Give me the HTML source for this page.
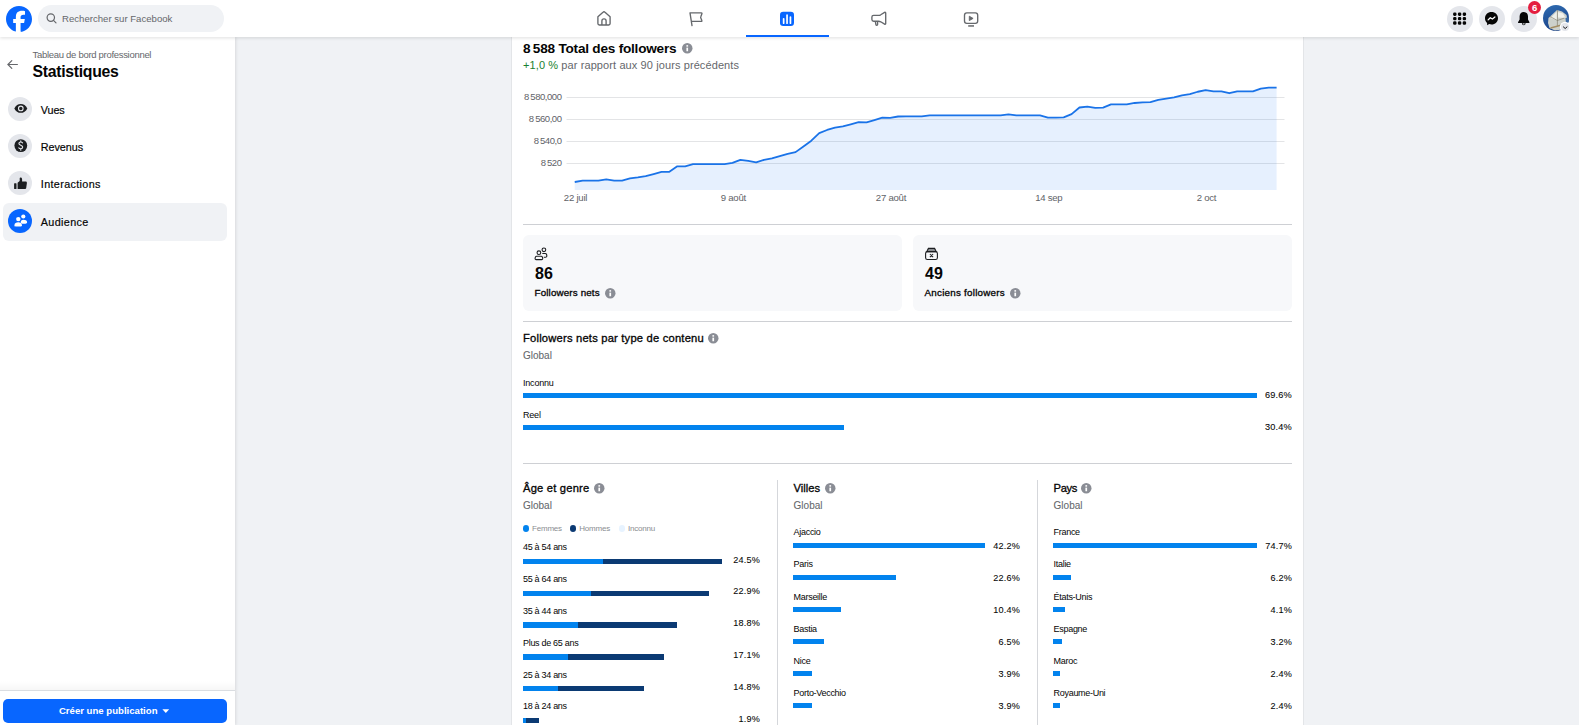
<!DOCTYPE html>
<html><head><meta charset="utf-8"><title>Statistiques</title>
<style>
html,body{margin:0;padding:0;width:1579px;height:725px;overflow:hidden;background:#F0F2F5;}
body{position:relative;font-family:"Liberation Sans",sans-serif;}
.t{position:absolute;white-space:nowrap;line-height:1;}
.r{position:absolute;}
.a{position:absolute;overflow:visible;}
</style></head><body>
<div class="r" style="left:0px;top:0px;width:1579px;height:725px;background:#F0F2F5;"></div>
<div class="r" style="left:512px;top:30px;width:791px;height:700px;background:#FFFFFF;box-shadow:0 0 0 1px rgba(0,0,0,0.05);"></div>
<div class="t" style="left:523.00px;top:41.89px;font-size:13.6px;color:#050505;font-weight:700;letter-spacing:-0.22px;">8&#8201;588 Total des followers</div>
<svg class="a" style="left:680.75px;top:42.25px" width="12.5" height="12.5" viewBox="680.75 42.25 12.5 12.5"><circle cx="687" cy="48.5" r="5.25" fill="#8A8D95"/><rect x="686.15" y="45.4" width="1.7" height="1.5" fill="#fff"/><rect x="686.15" y="47.9" width="1.7" height="3.6" fill="#fff"/></svg>
<div class="t" style="left:523.00px;top:59.69px;font-size:11px;color:#65676B;font-weight:400;letter-spacing:0.1px;"><span style="color:#1A7F30">+1,0&nbsp;%</span> par rapport aux 90 jours précédents</div>
<svg class="a" style="left:0;top:0" width="1579" height="725" viewBox="0 0 1579 725"><line x1="566.5" y1="97.5" x2="1284.5" y2="97.5" stroke="#E3E4E6" stroke-width="1"/><line x1="566.5" y1="119.5" x2="1284.5" y2="119.5" stroke="#E3E4E6" stroke-width="1"/><line x1="566.5" y1="141.5" x2="1284.5" y2="141.5" stroke="#E3E4E6" stroke-width="1"/><line x1="566.5" y1="163.5" x2="1284.5" y2="163.5" stroke="#E3E4E6" stroke-width="1"/><path d="M574.75,190 L574.75,182.00 L582.64,180.63 L590.52,180.60 L598.41,180.60 L606.29,179.43 L614.18,180.60 L622.07,180.60 L629.95,178.40 L637.84,177.37 L645.72,176.14 L653.61,174.03 L661.50,171.86 L669.38,171.74 L677.27,166.32 L685.15,166.30 L693.04,164.20 L700.93,164.20 L708.81,164.20 L716.70,164.20 L724.58,164.11 L732.47,162.86 L740.36,159.80 L748.24,160.91 L756.13,162.27 L764.01,159.82 L771.90,158.31 L779.78,156.11 L787.67,153.92 L795.56,152.13 L803.44,146.46 L811.33,140.72 L819.21,133.19 L827.10,129.98 L834.99,127.62 L842.87,126.42 L850.76,124.39 L858.64,122.23 L866.53,122.28 L874.42,120.02 L882.30,117.68 L890.19,117.79 L898.07,116.49 L905.96,116.40 L913.85,116.40 L921.73,116.35 L929.62,115.30 L937.50,115.30 L945.39,115.30 L953.28,115.30 L961.16,115.31 L969.05,115.33 L976.93,115.35 L984.82,115.37 L992.71,115.38 L1000.59,115.40 L1008.48,114.31 L1016.36,115.38 L1024.25,115.40 L1032.14,115.40 L1040.02,115.46 L1047.91,117.60 L1055.79,117.60 L1063.68,117.34 L1071.57,114.11 L1079.45,107.51 L1087.34,106.68 L1095.22,107.80 L1103.11,107.59 L1110.99,104.40 L1118.88,104.40 L1126.77,104.32 L1134.65,102.98 L1142.54,102.30 L1150.42,102.20 L1158.31,99.88 L1166.20,98.64 L1174.08,97.42 L1181.97,95.32 L1189.85,94.19 L1197.74,91.75 L1205.63,90.07 L1213.51,91.30 L1221.40,91.42 L1229.28,93.23 L1237.17,91.30 L1245.06,91.30 L1252.94,91.38 L1260.83,88.60 L1268.71,87.70 L1276.60,87.70 L1276.6,190 Z" fill="#1877F2" fill-opacity="0.11"/><polyline points="574.75,182.00 582.64,180.63 590.52,180.60 598.41,180.60 606.29,179.43 614.18,180.60 622.07,180.60 629.95,178.40 637.84,177.37 645.72,176.14 653.61,174.03 661.50,171.86 669.38,171.74 677.27,166.32 685.15,166.30 693.04,164.20 700.93,164.20 708.81,164.20 716.70,164.20 724.58,164.11 732.47,162.86 740.36,159.80 748.24,160.91 756.13,162.27 764.01,159.82 771.90,158.31 779.78,156.11 787.67,153.92 795.56,152.13 803.44,146.46 811.33,140.72 819.21,133.19 827.10,129.98 834.99,127.62 842.87,126.42 850.76,124.39 858.64,122.23 866.53,122.28 874.42,120.02 882.30,117.68 890.19,117.79 898.07,116.49 905.96,116.40 913.85,116.40 921.73,116.35 929.62,115.30 937.50,115.30 945.39,115.30 953.28,115.30 961.16,115.31 969.05,115.33 976.93,115.35 984.82,115.37 992.71,115.38 1000.59,115.40 1008.48,114.31 1016.36,115.38 1024.25,115.40 1032.14,115.40 1040.02,115.46 1047.91,117.60 1055.79,117.60 1063.68,117.34 1071.57,114.11 1079.45,107.51 1087.34,106.68 1095.22,107.80 1103.11,107.59 1110.99,104.40 1118.88,104.40 1126.77,104.32 1134.65,102.98 1142.54,102.30 1150.42,102.20 1158.31,99.88 1166.20,98.64 1174.08,97.42 1181.97,95.32 1189.85,94.19 1197.74,91.75 1205.63,90.07 1213.51,91.30 1221.40,91.42 1229.28,93.23 1237.17,91.30 1245.06,91.30 1252.94,91.38 1260.83,88.60 1268.71,87.70 1276.60,87.70" fill="none" stroke="#1A73E8" stroke-width="1.8" stroke-linejoin="round"/></svg>
<div class="t" style="right:1017.50px;top:91.66px;font-size:9.5px;color:#5F6368;font-weight:400;letter-spacing:-0.45px;">8&#8201;580,000</div>
<div class="t" style="right:1017.50px;top:113.66px;font-size:9.5px;color:#5F6368;font-weight:400;letter-spacing:-0.45px;">8&#8201;560,00</div>
<div class="t" style="right:1017.50px;top:135.66px;font-size:9.5px;color:#5F6368;font-weight:400;letter-spacing:-0.45px;">8&#8201;540,0</div>
<div class="t" style="right:1017.50px;top:157.66px;font-size:9.5px;color:#5F6368;font-weight:400;letter-spacing:-0.45px;">8&#8201;520</div>
<div class="t" style="left:535.5px;width:80px;text-align:center;top:193.47px;font-size:9.6px;color:#5F6368;letter-spacing:-0.25px">22 juil</div>
<div class="t" style="left:693.3px;width:80px;text-align:center;top:193.47px;font-size:9.6px;color:#5F6368;letter-spacing:-0.25px">9 août</div>
<div class="t" style="left:851px;width:80px;text-align:center;top:193.47px;font-size:9.6px;color:#5F6368;letter-spacing:-0.25px">27 août</div>
<div class="t" style="left:1008.8px;width:80px;text-align:center;top:193.47px;font-size:9.6px;color:#5F6368;letter-spacing:-0.25px">14 sep</div>
<div class="t" style="left:1166.5px;width:80px;text-align:center;top:193.47px;font-size:9.6px;color:#5F6368;letter-spacing:-0.25px">2 oct</div>
<div class="r" style="left:523px;top:224px;width:769px;height:1px;background:#CED0D4;"></div>
<div class="r" style="left:523px;top:235px;width:379px;height:76px;background:#F7F8FA;border-radius:6px;"></div>
<div class="t" style="left:535.00px;top:265.76px;font-size:16px;color:#050505;font-weight:700;letter-spacing:0.1px;">86</div>
<div class="t" style="left:534.50px;top:288.00px;font-size:9.8px;color:#050505;font-weight:400;letter-spacing:0.15px;-webkit-text-stroke:0.32px currentColor;">Followers nets</div>
<div class="r" style="left:913px;top:235px;width:379px;height:76px;background:#F7F8FA;border-radius:6px;"></div>
<div class="t" style="left:925.00px;top:265.76px;font-size:16px;color:#050505;font-weight:700;letter-spacing:0.1px;">49</div>
<div class="t" style="left:924.50px;top:288.00px;font-size:9.8px;color:#050505;font-weight:400;letter-spacing:0.25px;-webkit-text-stroke:0.32px currentColor;">Anciens followers</div>
<svg class="a" style="left:603.75px;top:286.75px" width="12.5" height="12.5" viewBox="603.75 286.75 12.5 12.5"><circle cx="610" cy="293" r="5.25" fill="#8A8D95"/><rect x="609.15" y="289.9" width="1.7" height="1.5" fill="#fff"/><rect x="609.15" y="292.4" width="1.7" height="3.6" fill="#fff"/></svg>
<svg class="a" style="left:1008.75px;top:286.75px" width="12.5" height="12.5" viewBox="1008.75 286.75 12.5 12.5"><circle cx="1015" cy="293" r="5.25" fill="#8A8D95"/><rect x="1014.15" y="289.9" width="1.7" height="1.5" fill="#fff"/><rect x="1014.15" y="292.4" width="1.7" height="3.6" fill="#fff"/></svg>
<svg class="a" style="left:532px;top:244px" width="20" height="20" viewBox="532 244 20 20" fill="none" stroke="#1C1E21" stroke-width="1.1" stroke-linejoin="round"><circle cx="538.9" cy="252.7" r="1.85"/><path d="M536.7,256.3 H541.1 C541.9,256.3 542.3,256.8 542.5,257.4 L542.7,258.4 C542.8,259.1 542.4,259.6 541.7,259.6 H536.1 C535.4,259.6 535,259.1 535.1,258.4 L535.3,257.4 C535.5,256.8 535.9,256.3 536.7,256.3 Z"/><circle cx="543.9" cy="249.8" r="1.85"/><path d="M542.3,253.5 H545.2 C545.9,253.5 546.4,253.9 546.6,254.5 L546.8,255.6 C547,256.5 546.4,257.3 545.5,257.3 H543.8"/></svg>
<svg class="a" style="left:922px;top:244px" width="20" height="20" viewBox="922 244 20 20" fill="none" stroke="#1C1E21" stroke-width="1.1"><path d="M928.4,248.4 H934.6 L936.2,251.6 H926.8 Z" fill="#8A8D91"/><rect x="925.6" y="251.6" width="11.8" height="7.9" rx="1.8"/><path d="M929.9,254 L933.1,257.2 M933.1,254 L929.9,257.2" stroke-width="1.05"/></svg>
<div class="r" style="left:523px;top:321px;width:769px;height:1px;background:#CED0D4;"></div>
<div class="t" style="left:523.00px;top:332.52px;font-size:11.2px;color:#050505;font-weight:400;letter-spacing:0.2px;-webkit-text-stroke:0.32px currentColor;">Followers nets par type de contenu</div>
<svg class="a" style="left:706.55px;top:331.95px" width="12.5" height="12.5" viewBox="706.55 331.95 12.5 12.5"><circle cx="712.8" cy="338.2" r="5.25" fill="#8A8D95"/><rect x="711.9499999999999" y="335.09999999999997" width="1.7" height="1.5" fill="#fff"/><rect x="711.9499999999999" y="337.59999999999997" width="1.7" height="3.6" fill="#fff"/></svg>
<div class="t" style="left:523.00px;top:351.34px;font-size:10px;color:#65676B;font-weight:400;-webkit-text-stroke:0.08px currentColor;">Global</div>
<div class="t" style="left:523.00px;top:378.58px;font-size:9px;color:#050505;font-weight:400;letter-spacing:-0.2px;">Inconnu</div>
<div class="r" style="left:523px;top:393px;width:734px;height:5px;background:#0283EE;"></div>
<div class="t" style="right:287.00px;top:391.21px;font-size:9.2px;color:#050505;font-weight:400;letter-spacing:0.2px;-webkit-text-stroke:0.08px currentColor;">69.6%</div>
<div class="t" style="left:523.00px;top:411.38px;font-size:9px;color:#050505;font-weight:400;letter-spacing:-0.2px;">Reel</div>
<div class="r" style="left:523px;top:425px;width:321px;height:5px;background:#0283EE;"></div>
<div class="t" style="right:287.00px;top:423.21px;font-size:9.2px;color:#050505;font-weight:400;letter-spacing:0.2px;-webkit-text-stroke:0.08px currentColor;">30.4%</div>
<div class="r" style="left:523px;top:463px;width:769px;height:1px;background:#CED0D4;"></div>
<div class="t" style="left:523.00px;top:482.52px;font-size:11.2px;color:#050505;font-weight:400;letter-spacing:0.2px;-webkit-text-stroke:0.32px currentColor;">Âge et genre</div>
<svg class="a" style="left:592.75px;top:482.25px" width="12.5" height="12.5" viewBox="592.75 482.25 12.5 12.5"><circle cx="599" cy="488.5" r="5.25" fill="#8A8D95"/><rect x="598.15" y="485.4" width="1.7" height="1.5" fill="#fff"/><rect x="598.15" y="487.9" width="1.7" height="3.6" fill="#fff"/></svg>
<div class="t" style="left:523.00px;top:501.04px;font-size:10px;color:#65676B;font-weight:400;-webkit-text-stroke:0.08px currentColor;">Global</div>
<div class="r" style="left:523px;top:525.0px;width:6.2px;height:6.8px;border-radius:50%;background:#0283EE"></div>
<div class="t" style="left:532.00px;top:525.03px;font-size:8px;color:#8A8D91;font-weight:400;letter-spacing:-0.2px;">Femmes</div>
<div class="r" style="left:570.2px;top:525.0px;width:6.2px;height:6.8px;border-radius:50%;background:#0B3A73"></div>
<div class="t" style="left:579.20px;top:525.03px;font-size:8px;color:#8A8D91;font-weight:400;letter-spacing:-0.2px;">Hommes</div>
<div class="r" style="left:619px;top:525.0px;width:6.2px;height:6.8px;border-radius:50%;background:#E7F3FF"></div>
<div class="t" style="left:628.00px;top:525.03px;font-size:8px;color:#8A8D91;font-weight:400;letter-spacing:-0.2px;">Inconnu</div>
<div class="t" style="left:523.00px;top:543.18px;font-size:9px;color:#050505;font-weight:400;letter-spacing:-0.3px;">45 à 54 ans</div>
<div class="r" style="left:523px;top:558.8px;width:80px;height:5.2px;background:#0283EE;"></div>
<div class="r" style="left:603px;top:558.8px;width:119px;height:5.2px;background:#0B3A73;"></div>
<div class="t" style="right:819.00px;top:555.50px;font-size:9.1px;color:#050505;font-weight:400;letter-spacing:0.2px;-webkit-text-stroke:0.08px currentColor;">24.5%</div>
<div class="t" style="left:523.00px;top:575.02px;font-size:9px;color:#050505;font-weight:400;letter-spacing:-0.3px;">55 à 64 ans</div>
<div class="r" style="left:523px;top:590.64px;width:68px;height:5.2px;background:#0283EE;"></div>
<div class="r" style="left:591px;top:590.64px;width:117.70000000000005px;height:5.2px;background:#0B3A73;"></div>
<div class="t" style="right:819.00px;top:587.34px;font-size:9.1px;color:#050505;font-weight:400;letter-spacing:0.2px;-webkit-text-stroke:0.08px currentColor;">22.9%</div>
<div class="t" style="left:523.00px;top:606.86px;font-size:9px;color:#050505;font-weight:400;letter-spacing:-0.3px;">35 à 44 ans</div>
<div class="r" style="left:523px;top:622.4799999999999px;width:55px;height:5.2px;background:#0283EE;"></div>
<div class="r" style="left:578px;top:622.4799999999999px;width:99px;height:5.2px;background:#0B3A73;"></div>
<div class="t" style="right:819.00px;top:619.18px;font-size:9.1px;color:#050505;font-weight:400;letter-spacing:0.2px;-webkit-text-stroke:0.08px currentColor;">18.8%</div>
<div class="t" style="left:523.00px;top:638.70px;font-size:9px;color:#050505;font-weight:400;letter-spacing:-0.3px;">Plus de 65 ans</div>
<div class="r" style="left:523px;top:654.3199999999999px;width:45px;height:5.2px;background:#0283EE;"></div>
<div class="r" style="left:568px;top:654.3199999999999px;width:95.70000000000005px;height:5.2px;background:#0B3A73;"></div>
<div class="t" style="right:819.00px;top:651.02px;font-size:9.1px;color:#050505;font-weight:400;letter-spacing:0.2px;-webkit-text-stroke:0.08px currentColor;">17.1%</div>
<div class="t" style="left:523.00px;top:670.54px;font-size:9px;color:#050505;font-weight:400;letter-spacing:-0.3px;">25 à 34 ans</div>
<div class="r" style="left:523px;top:686.16px;width:35.200000000000045px;height:5.2px;background:#0283EE;"></div>
<div class="r" style="left:558.2px;top:686.16px;width:85.5px;height:5.2px;background:#0B3A73;"></div>
<div class="t" style="right:819.00px;top:682.86px;font-size:9.1px;color:#050505;font-weight:400;letter-spacing:0.2px;-webkit-text-stroke:0.08px currentColor;">14.8%</div>
<div class="t" style="left:523.00px;top:702.38px;font-size:9px;color:#050505;font-weight:400;letter-spacing:-0.3px;">18 à 24 ans</div>
<div class="r" style="left:523px;top:718.0px;width:2.7999999999999545px;height:5.2px;background:#0283EE;"></div>
<div class="r" style="left:525.8px;top:718.0px;width:13.0px;height:5.2px;background:#0B3A73;"></div>
<div class="t" style="right:819.00px;top:714.70px;font-size:9.1px;color:#050505;font-weight:400;letter-spacing:0.2px;-webkit-text-stroke:0.08px currentColor;">1.9%</div>
<div class="r" style="left:777px;top:480px;width:1px;height:260px;background:#D5D7DB;"></div>
<div class="r" style="left:1037px;top:480px;width:1px;height:260px;background:#D5D7DB;"></div>
<div class="t" style="left:793.60px;top:482.52px;font-size:11.2px;color:#050505;font-weight:400;-webkit-text-stroke:0.32px currentColor;">Villes</div>
<svg class="a" style="left:823.55px;top:482.25px" width="12.5" height="12.5" viewBox="823.55 482.25 12.5 12.5"><circle cx="829.8" cy="488.5" r="5.25" fill="#8A8D95"/><rect x="828.9499999999999" y="485.4" width="1.7" height="1.5" fill="#fff"/><rect x="828.9499999999999" y="487.9" width="1.7" height="3.6" fill="#fff"/></svg>
<div class="t" style="left:793.60px;top:501.04px;font-size:10px;color:#65676B;font-weight:400;-webkit-text-stroke:0.08px currentColor;">Global</div>
<div class="t" style="left:793.60px;top:528.38px;font-size:9px;color:#050505;font-weight:400;letter-spacing:-0.3px;">Ajaccio</div>
<div class="r" style="left:793px;top:543.0px;width:191.60000000000002px;height:5px;background:#0283EE;"></div>
<div class="t" style="right:559.00px;top:541.50px;font-size:9.1px;color:#050505;font-weight:400;letter-spacing:0.2px;-webkit-text-stroke:0.08px currentColor;">42.2%</div>
<div class="t" style="left:793.60px;top:560.46px;font-size:9px;color:#050505;font-weight:400;letter-spacing:-0.3px;">Paris</div>
<div class="r" style="left:793px;top:575.08px;width:103px;height:5px;background:#0283EE;"></div>
<div class="t" style="right:559.00px;top:573.58px;font-size:9.1px;color:#050505;font-weight:400;letter-spacing:0.2px;-webkit-text-stroke:0.08px currentColor;">22.6%</div>
<div class="t" style="left:793.60px;top:592.54px;font-size:9px;color:#050505;font-weight:400;letter-spacing:-0.3px;">Marseille</div>
<div class="r" style="left:793px;top:607.16px;width:48px;height:5px;background:#0283EE;"></div>
<div class="t" style="right:559.00px;top:605.66px;font-size:9.1px;color:#050505;font-weight:400;letter-spacing:0.2px;-webkit-text-stroke:0.08px currentColor;">10.4%</div>
<div class="t" style="left:793.60px;top:624.62px;font-size:9px;color:#050505;font-weight:400;letter-spacing:-0.3px;">Bastia</div>
<div class="r" style="left:793px;top:639.24px;width:30.799999999999955px;height:5px;background:#0283EE;"></div>
<div class="t" style="right:559.00px;top:637.74px;font-size:9.1px;color:#050505;font-weight:400;letter-spacing:0.2px;-webkit-text-stroke:0.08px currentColor;">6.5%</div>
<div class="t" style="left:793.60px;top:656.70px;font-size:9px;color:#050505;font-weight:400;letter-spacing:-0.3px;">Nice</div>
<div class="r" style="left:793px;top:671.3199999999999px;width:18.899999999999977px;height:5px;background:#0283EE;"></div>
<div class="t" style="right:559.00px;top:669.82px;font-size:9.1px;color:#050505;font-weight:400;letter-spacing:0.2px;-webkit-text-stroke:0.08px currentColor;">3.9%</div>
<div class="t" style="left:793.60px;top:688.78px;font-size:9px;color:#050505;font-weight:400;letter-spacing:-0.3px;">Porto-Vecchio</div>
<div class="r" style="left:793px;top:703.4px;width:18.899999999999977px;height:5px;background:#0283EE;"></div>
<div class="t" style="right:559.00px;top:701.90px;font-size:9.1px;color:#050505;font-weight:400;letter-spacing:0.2px;-webkit-text-stroke:0.08px currentColor;">3.9%</div>
<div class="t" style="left:1053.60px;top:482.52px;font-size:11.2px;color:#050505;font-weight:400;letter-spacing:-0.4px;-webkit-text-stroke:0.32px currentColor;">Pays</div>
<svg class="a" style="left:1079.55px;top:482.25px" width="12.5" height="12.5" viewBox="1079.55 482.25 12.5 12.5"><circle cx="1085.8" cy="488.5" r="5.25" fill="#8A8D95"/><rect x="1084.95" y="485.4" width="1.7" height="1.5" fill="#fff"/><rect x="1084.95" y="487.9" width="1.7" height="3.6" fill="#fff"/></svg>
<div class="t" style="left:1053.60px;top:501.04px;font-size:10px;color:#65676B;font-weight:400;-webkit-text-stroke:0.08px currentColor;">Global</div>
<div class="t" style="left:1053.60px;top:528.38px;font-size:9px;color:#050505;font-weight:400;letter-spacing:-0.3px;">France</div>
<div class="r" style="left:1053px;top:543.0px;width:203.9000000000001px;height:5px;background:#0283EE;"></div>
<div class="t" style="right:287.00px;top:541.50px;font-size:9.1px;color:#050505;font-weight:400;letter-spacing:0.2px;-webkit-text-stroke:0.08px currentColor;">74.7%</div>
<div class="t" style="left:1053.60px;top:560.46px;font-size:9px;color:#050505;font-weight:400;letter-spacing:-0.3px;">Italie</div>
<div class="r" style="left:1053px;top:575.08px;width:18px;height:5px;background:#0283EE;"></div>
<div class="t" style="right:287.00px;top:573.58px;font-size:9.1px;color:#050505;font-weight:400;letter-spacing:0.2px;-webkit-text-stroke:0.08px currentColor;">6.2%</div>
<div class="t" style="left:1053.60px;top:592.54px;font-size:9px;color:#050505;font-weight:400;letter-spacing:-0.3px;">États-Unis</div>
<div class="r" style="left:1053px;top:607.16px;width:12px;height:5px;background:#0283EE;"></div>
<div class="t" style="right:287.00px;top:605.66px;font-size:9.1px;color:#050505;font-weight:400;letter-spacing:0.2px;-webkit-text-stroke:0.08px currentColor;">4.1%</div>
<div class="t" style="left:1053.60px;top:624.62px;font-size:9px;color:#050505;font-weight:400;letter-spacing:-0.3px;">Espagne</div>
<div class="r" style="left:1053px;top:639.24px;width:9px;height:5px;background:#0283EE;"></div>
<div class="t" style="right:287.00px;top:637.74px;font-size:9.1px;color:#050505;font-weight:400;letter-spacing:0.2px;-webkit-text-stroke:0.08px currentColor;">3.2%</div>
<div class="t" style="left:1053.60px;top:656.70px;font-size:9px;color:#050505;font-weight:400;letter-spacing:-0.3px;">Maroc</div>
<div class="r" style="left:1053px;top:671.3199999999999px;width:7px;height:5px;background:#0283EE;"></div>
<div class="t" style="right:287.00px;top:669.82px;font-size:9.1px;color:#050505;font-weight:400;letter-spacing:0.2px;-webkit-text-stroke:0.08px currentColor;">2.4%</div>
<div class="t" style="left:1053.60px;top:688.78px;font-size:9px;color:#050505;font-weight:400;letter-spacing:-0.3px;">Royaume-Uni</div>
<div class="r" style="left:1053px;top:703.4px;width:7px;height:5px;background:#0283EE;"></div>
<div class="t" style="right:287.00px;top:701.90px;font-size:9.1px;color:#050505;font-weight:400;letter-spacing:0.2px;-webkit-text-stroke:0.08px currentColor;">2.4%</div>
<div class="r" style="left:0px;top:37px;width:235px;height:688px;background:#FFFFFF;box-shadow:1px 0 3px rgba(0,0,0,0.10);"></div>
<div class="t" style="left:32.60px;top:49.86px;font-size:9.5px;color:#65676B;font-weight:400;letter-spacing:-0.3px;">Tableau de bord professionnel</div>
<div class="t" style="left:32.60px;top:63.83px;font-size:15.8px;color:#050505;font-weight:700;letter-spacing:-0.3px;">Statistiques</div>
<svg class="a" style="left:4px;top:56px" width="18" height="18" viewBox="4 56 18 18" fill="none" stroke="#65676B" stroke-width="1.2" stroke-linecap="round"><path d="M17.4,64.5 H8 M11.8,60.6 L7.9,64.5 L11.8,68.4"/></svg>
<div class="r" style="left:3px;top:203px;width:224px;height:38px;background:#F0F2F5;border-radius:6px;"></div>
<div class="r" style="left:8px;top:96.9px;width:24px;height:24px;border-radius:50%;background:#E4E6EB"></div>
<div class="t" style="left:40.80px;top:104.76px;font-size:10.8px;color:#050505;font-weight:400;letter-spacing:-0.1px;-webkit-text-stroke:0.18px currentColor;">Vues</div>
<div class="r" style="left:8px;top:134px;width:24px;height:24px;border-radius:50%;background:#E4E6EB"></div>
<div class="t" style="left:40.80px;top:141.86px;font-size:10.8px;color:#050505;font-weight:400;letter-spacing:-0.05px;-webkit-text-stroke:0.18px currentColor;">Revenus</div>
<div class="r" style="left:8px;top:171px;width:24px;height:24px;border-radius:50%;background:#E4E6EB"></div>
<div class="t" style="left:40.80px;top:178.96px;font-size:10.8px;color:#050505;font-weight:400;letter-spacing:0.35px;-webkit-text-stroke:0.18px currentColor;">Interactions</div>
<div class="r" style="left:8px;top:209px;width:24px;height:24px;border-radius:50%;background:#0866FF"></div>
<div class="t" style="left:40.80px;top:216.86px;font-size:10.8px;color:#050505;font-weight:400;letter-spacing:0.35px;-webkit-text-stroke:0.18px currentColor;">Audience</div>
<svg class="a" style="left:8px;top:97px" width="24" height="24" viewBox="8 97 24 24"><path d="M14.3,108.4 C15.8,105.3 18,104 20.8,104 C23.6,104 25.8,105.3 27.3,108.4 C25.8,111.5 23.6,112.8 20.8,112.8 C18,112.8 15.8,111.5 14.3,108.4 Z" fill="#1C1E21"/><circle cx="20.8" cy="108.4" r="2.3" fill="none" stroke="#E4E6EB" stroke-width="1.1"/></svg>
<svg class="a" style="left:8px;top:134px" width="24" height="24" viewBox="8 134 24 24"><circle cx="20.8" cy="145.6" r="6.4" fill="#1C1E21"/><path d="M22.6,142.8 C22,142.2 21.4,142 20.7,142 C19.6,142 18.9,142.6 18.9,143.5 C18.9,145.6 22.7,144.8 22.7,147.1 C22.7,148.1 21.9,148.8 20.8,148.8 C20,148.8 19.3,148.5 18.8,147.9 M20.8,140.9 V142 M20.8,148.8 V150.2" fill="none" stroke="#E4E6EB" stroke-width="1.1" stroke-linecap="round"/></svg>
<svg class="a" style="left:8px;top:171px" width="24" height="24" viewBox="8 171 24 24" fill="#1C1E21"><rect x="14.1" y="183.2" width="2.4" height="5.9" rx="0.5"/><path d="M17.6,182.8 L19.4,181.2 C19.6,181 19.7,180.8 19.7,180.5 V178.3 C19.7,177.8 20.1,177.5 20.6,177.5 C21.4,177.5 22.1,178.2 22.1,179.2 V181.5 H25.7 C26.5,181.5 27,182.2 26.9,183 L26.2,188 C26.1,188.7 25.5,189.1 24.8,189.1 H17.6 Z"/></svg>
<svg class="a" style="left:8px;top:209px" width="24" height="24" viewBox="8 209 24 24" fill="#FFFFFF"><circle cx="23.3" cy="216.5" r="2.1"/><path d="M20.6,222.6 C20.8,220.4 22,219.7 23.4,219.7 C25.4,219.7 27,220.5 27.1,222.1 C27.2,223.2 26.4,223.8 25.4,223.8 H21.8 Z"/><circle cx="18.3" cy="219.1" r="2.2"/><path d="M14.4,225.2 C14.6,223 16.2,222.2 18.2,222.2 C20.2,222.2 21.8,223 22,225.2 C22.1,226 21.5,226.4 20.8,226.4 H15.6 C14.9,226.4 14.3,226 14.4,225.2 Z"/></svg>
<div class="r" style="left:0px;top:681px;width:235px;height:9px;background:linear-gradient(rgba(0,0,0,0),rgba(0,0,0,0.035));"></div>
<div class="r" style="left:0px;top:690px;width:235px;height:1px;background:#DADDE1;"></div>
<div class="r" style="left:3px;top:699px;width:224px;height:24px;background:#0866FF;border-radius:5px;"></div>
<div class="t" style="left:58.90px;top:705.97px;font-size:9.6px;color:#FFFFFF;font-weight:700;">Créer une publication</div>
<svg class="a" style="left:160px;top:706px" width="12" height="10" viewBox="160 706 12 10"><path d="M162.4,709.3 H169.2 L165.8,713 Z" fill="#fff"/></svg>
<div class="r" style="left:0px;top:0px;width:1579px;height:37px;background:#FFFFFF;box-shadow:0 1.5px 3px rgba(0,0,0,0.10);"></div>
<svg class="a" style="left:6px;top:5.5px" width="26" height="26" viewBox="0 0 36 36"><path fill="#0866FF" d="M20.181 35.87C29.094 34.791 36 27.202 36 18c0-9.941-8.059-18-18-18S0 8.059 0 18c0 8.442 5.811 15.526 13.652 17.471L14 34h5.5l.681 1.87Z"/><path fill="#fff" d="M13.651 35.471v-11.97H9.936V18h3.715v-2.37c0-6.127 2.772-8.964 8.784-8.964 1.138 0 3.103.223 3.91.446v4.983c-.425-.043-1.167-.065-2.081-.065-2.952 0-4.09 1.116-4.09 4.025V18h5.883l-1.008 5.5h-4.867v12.37a18.183 18.183 0 0 1-6.53-.399Z"/></svg>
<div class="r" style="left:38px;top:5px;width:186px;height:27px;background:#F0F2F5;border-radius:14px;"></div>
<svg class="a" style="left:44px;top:10px" width="16" height="16" viewBox="44 10 16 16" fill="none" stroke="#65676B" stroke-width="1.2"><circle cx="50.8" cy="17.6" r="3.7"/><path d="M53.5,20.3 L56,22.8" stroke-linecap="round"/></svg>
<div class="t" style="left:62.00px;top:13.67px;font-size:9.6px;color:#65676B;font-weight:400;">Rechercher sur Facebook</div>
<svg class="a" style="left:590px;top:6px" width="30" height="26" viewBox="590 6 30 26" fill="none" stroke="#65686C" stroke-width="1.35" stroke-linejoin="round"><path d="M597.9,16.8 L603,12.2 C603.6,11.6 604.4,11.6 605,12.2 L610.1,16.8 V23.6 C610.1,24.5 609.6,25 608.7,25 H599.3 C598.4,25 597.9,24.5 597.9,23.6 Z"/><path d="M601.9,25 V21 C601.9,19.7 602.8,18.9 604,18.9 C605.2,18.9 606.1,19.7 606.1,21 V25"/></svg>
<svg class="a" style="left:682px;top:6px" width="30" height="26" viewBox="682 6 30 26" fill="none" stroke="#65686C" stroke-width="1.35" stroke-linejoin="round" stroke-linecap="round"><path d="M692,25.6 L690,12.9 H701.4 C701.9,12.9 702.1,13.3 701.9,13.7 L700.8,16.7 C700.6,17.1 700.6,17.5 700.8,17.9 L701.9,20.5 C702.1,20.9 701.8,21.3 701.4,21.3 H691.3"/></svg>
<svg class="a" style="left:778px;top:10px" width="18" height="18" viewBox="778 10 18 18"><rect x="780" y="11.8" width="14" height="14.2" rx="3.2" fill="#0866FF"/><rect x="782.8" y="18" width="1.7" height="6" rx="0.85" fill="#fff"/><rect x="786.2" y="14.2" width="1.7" height="9.8" rx="0.85" fill="#fff"/><rect x="789.6" y="16.2" width="1.7" height="7.8" rx="0.85" fill="#fff"/></svg>
<div class="r" style="left:746px;top:35px;width:83px;height:2px;background:#0866FF;"></div>
<svg class="a" style="left:864px;top:6px" width="30" height="26" viewBox="864 6 30 26" fill="none" stroke="#65686C" stroke-width="1.35" stroke-linejoin="round"><path d="M873.6,15.4 H878.6 C879.4,15.4 880,15.2 880.7,14.8 L884.6,12.4 C885.1,12.1 885.7,12.4 885.7,13 V23.6 C885.7,24.2 885.1,24.5 884.6,24.2 L880.7,21.8 C880,21.4 879.4,21.2 878.6,21.2 H873.6 C872.6,21.2 871.9,20.5 871.9,19.5 V17.1 C871.9,16.1 872.6,15.4 873.6,15.4 Z"/><path d="M875.3,21.2 L875.9,24.6 C876,25.1 876.3,25.3 876.8,25.3 C877.3,25.3 877.6,25 877.6,24.5 V21.2"/></svg>
<svg class="a" style="left:956px;top:6px" width="30" height="26" viewBox="956 6 30 26" fill="none" stroke="#65686C" stroke-width="1.35"><rect x="964.5" y="12.9" width="13.2" height="10.4" rx="2.3"/><path d="M969.3,16.2 L973.1,18.4 L969.3,20.6 Z" fill="#65686C" stroke-linejoin="round" stroke-width="0.9"/><rect x="968.2" y="25.2" width="5.8" height="1.5" fill="#65686C" stroke="none"/></svg>
<div class="r" style="left:1447px;top:5.5px;width:26px;height:26px;border-radius:50%;background:#E4E6EB"></div>
<div class="r" style="left:1479px;top:5.5px;width:26px;height:26px;border-radius:50%;background:#E4E6EB"></div>
<div class="r" style="left:1511px;top:5.5px;width:26px;height:26px;border-radius:50%;background:#E4E6EB"></div>
<svg class="a" style="left:1447px;top:5px" width="26" height="26" viewBox="1447 5 26 26" fill="#050505"><rect x="1453.1" y="12.5" width="3.4" height="3.4" rx="1.3"/><rect x="1453.1" y="16.900000000000002" width="3.4" height="3.4" rx="1.3"/><rect x="1453.1" y="21.3" width="3.4" height="3.4" rx="1.3"/><rect x="1457.8999999999999" y="12.5" width="3.4" height="3.4" rx="1.3"/><rect x="1457.8999999999999" y="16.900000000000002" width="3.4" height="3.4" rx="1.3"/><rect x="1457.8999999999999" y="21.3" width="3.4" height="3.4" rx="1.3"/><rect x="1462.7" y="12.5" width="3.4" height="3.4" rx="1.3"/><rect x="1462.7" y="16.900000000000002" width="3.4" height="3.4" rx="1.3"/><rect x="1462.7" y="21.3" width="3.4" height="3.4" rx="1.3"/></svg>
<svg class="a" style="left:1479px;top:5px" width="26" height="26" viewBox="1479 5 26 26"><path d="M1491.5,11.9 C1487.8,11.9 1485,14.6 1485,18.3 C1485,20.2 1485.8,21.9 1487.1,23 V25.2 L1489.2,24 C1489.9,24.3 1490.7,24.5 1491.5,24.5 C1495.2,24.5 1498,21.8 1498,18.2 C1498,14.6 1495.2,11.9 1491.5,11.9 Z" fill="#050505"/><path d="M1488.1,19.9 L1490.3,17.7 L1492.4,19.1 L1494.9,17" fill="none" stroke="#fff" stroke-width="1.25" stroke-linejoin="round" stroke-linecap="round"/></svg>
<svg class="a" style="left:1511px;top:5px" width="26" height="26" viewBox="1511 5 26 26"><path d="M1523.8,12 C1521.1,12 1519.6,13.9 1519.6,16.4 V19.6 L1518,22.2 C1517.8,22.6 1518,23 1518.5,23 H1529 C1529.5,23 1529.7,22.6 1529.5,22.2 L1528,19.6 V16.4 C1528,13.9 1526.5,12 1523.8,12 Z" fill="#050505"/><path d="M1521.9,23.3 C1522,24.5 1522.8,25.2 1523.8,25.2 C1524.8,25.2 1525.6,24.5 1525.7,23.3 Z" fill="#050505"/><ellipse cx="1523.8" cy="23.9" rx="0.8" ry="0.6" fill="#E4E6EB"/></svg>
<div class="r" style="left:1528px;top:1px;width:13.2px;height:13.2px;border-radius:50%;background:#E41E3F"></div>
<div class="t" style="left:1531.60px;top:3.26px;font-size:9.5px;color:#FFFFFF;font-weight:700;width:6px;text-align:center;">6</div>
<svg class="a" style="left:1543px;top:5px" width="26" height="26" viewBox="0 0 26 26"><defs><clipPath id="av"><circle cx="13" cy="13" r="13"/></clipPath><linearGradient id="sky" x1="0" y1="0" x2="0.3" y2="1"><stop offset="0" stop-color="#2F6DB3"/><stop offset="1" stop-color="#1A4388"/></linearGradient></defs><g clip-path="url(#av)"><rect width="26" height="26" fill="url(#sky)"/><path d="M5.5,13 L14,5 L19,6.5 L23.5,10 L24.5,15 L23,21 L19,24.5 L12,25.5 L6.5,23 L5,18 Z" fill="#CDD1CB"/><path d="M7.5,13 L14,6.5 L14,15.5 Z" fill="#EDEFEA"/><path d="M15,7 L20,8.5 L22.5,13 L15,12.5 Z" fill="#F1F2EC"/><path d="M14.4,5 V21 M7,11.5 L14.4,15.5 L21.5,13" stroke="#77725F" stroke-width="0.6" fill="none"/><path d="M7.5,23 L20.5,19.5" stroke="#A38D63" stroke-width="1.3" fill="none"/><path d="M22.5,13 L26,12 V19 L23,19 Z" fill="#3A6AA6"/></g></svg>
<div class="r" style="left:1560.8px;top:22.7px;width:8.4px;height:8.4px;border-radius:50%;background:#E4E6EB;box-shadow:0 0 0 1.2px #fff"></div>
<svg class="a" style="left:1560.8px;top:22.7px" width="9" height="9" viewBox="0 0 9 9"><path d="M2.4,3.9 L4.2,5.5 L6,3.9" fill="none" stroke="#050505" stroke-width="0.95" stroke-linecap="round"/></svg>
</body></html>
